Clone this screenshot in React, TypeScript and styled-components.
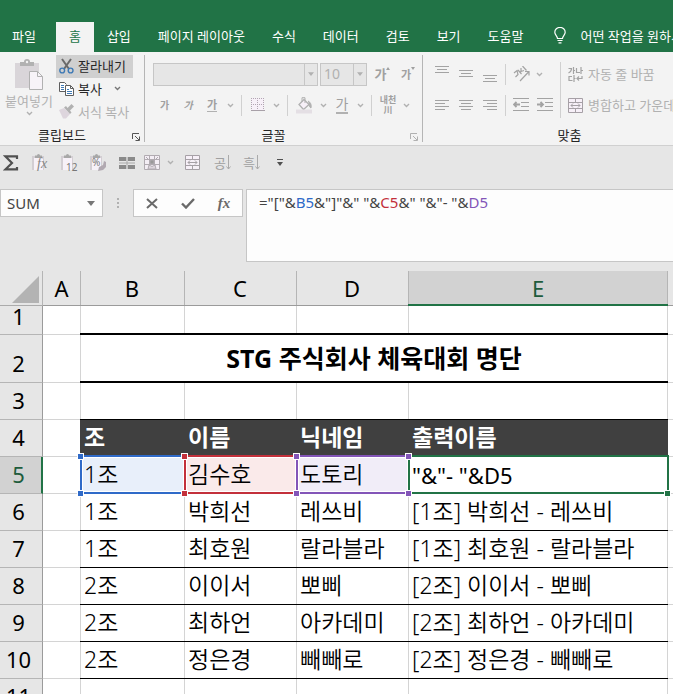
import React from 'react';
import styled, { createGlobalStyle, css } from 'styled-components';

const GRAY = '#b1b1b1';
const GREEN = '#217346';
const GRID = '#d4d4d4';

const GlobalStyle = createGlobalStyle`
  *, *::before, *::after { box-sizing: border-box; }
  body {
    margin: 0;
    background: #e6e6e6;
    font-family: "Noto Sans", "Noto Sans CJK KR", sans-serif;
    font-size: 13px;
    line-height: 20px;
    color: #262626;
    overflow: hidden;
  }
  button, input {
    font: inherit;
    color: inherit;
    border: 0;
    padding: 0;
    margin: 0;
    background: transparent;
    min-width: 0;
  }
  svg { display: block; flex: none; }
`;

const Window = styled.div`
  display: flex;
  flex-direction: column;
  min-height: 100vh;
  overflow: hidden;
`;

/* ---------- tabs ---------- */
const TabBar = styled.nav`
  display: flex;
  align-items: stretch;
  height: 52px;
  padding-top: 22px;
  background: ${GREEN};
  white-space: nowrap;
  overflow: hidden;
`;
const Tab = styled.button<{ $active?: boolean; $file?: boolean }>`
  flex: none;
  padding: 0 14px 3px 13px;
  color: ${p => (p.$active ? GREEN : '#fff')};
  background: ${p => (p.$active ? '#f3f3f3' : 'transparent')};
  ${p => p.$active && css`padding-right: 13px;`}
  ${p => p.$file && css`margin-right: 6px; padding-left: 12px;`}
`;
const TellMe = styled.button`
  display: flex;
  align-items: center;
  gap: 14px;
  flex: none;
  margin-left: 17px;
  padding-bottom: 3px;
  color: #fff;
`;

/* ---------- ribbon ---------- */
const Ribbon = styled.div`
  display: flex;
  height: 94px;
  padding-top: 3px;
  background: #f3f3f3;
  border-bottom: 1px solid #d0d0d0;
  overflow: hidden;
  white-space: nowrap;
`;
const Group = styled.section<{ $w: number }>`
  flex: none;
  display: flex;
  flex-direction: column;
  width: ${p => p.$w}px;
  margin-bottom: 3px;
  border-right: 1px solid #b5b5b5;
`;
const GroupBody = styled.div`
  display: flex;
  flex: 1;
`;
const GroupFoot = styled.div`
  display: grid;
  grid-template-columns: 1fr 20px;
  align-items: center;
  justify-items: center;
  height: 14px;
  line-height: 14px;
`;
const Launcher = styled.button`
  padding: 3px 0 0 4px;
`;
const PasteButton = styled.button`
  display: flex;
  flex-direction: column;
  align-items: center;
  width: 56px;
  padding: 4px 0 0 2px;
  color: ${GRAY};
  line-height: 18px;
  gap: 1px;
`;
const Stack = styled.div`
  display: flex;
  flex-direction: column;
`;
const LabelButton = styled.button<{ $on?: boolean; $off?: boolean }>`
  display: flex;
  align-items: center;
  gap: 4px;
  width: 77px;
  height: 23px;
  padding: 0 3px 2px;
  background: ${p => (p.$on ? '#d0d0d0' : 'transparent')};
  color: ${p => (p.$off ? GRAY : '#262626')};
`;
const Tools = styled.div<{ $pad: number }>`
  display: flex;
  flex-direction: column;
  gap: 3px;
  padding: 5px 0 0 ${p => p.$pad}px;
`;
const ToolRow = styled.div`
  display: flex;
  align-items: center;
  height: 28px;
`;
const Tool = styled.button<{ $w?: number }>`
  flex: none;
  display: flex;
  align-items: center;
  justify-content: center;
  width: ${p => p.$w ?? 24}px;
  height: 24px;
  color: ${GRAY};
`;
const Rule = styled.span<{ $tall?: boolean; $tight?: boolean }>`
  flex: none;
  width: 1px;
  height: ${p => (p.$tall ? 56 : 21)}px;
  margin: ${p => (p.$tall ? '7px 3px 0' : p.$tight ? '0 3px' : '0 4px 0 5px')};
  background: #d0d0d0;
`;
const Combo = styled.label<{ $w: number }>`
  display: flex;
  align-items: stretch;
  width: ${p => p.$w}px;
  height: 23px;
  margin-right: 2px;
  background: #e6e6e6;
  border: 1px solid #c6c6c6;
  color: ${GRAY};
  font-size: 14px;
`;
const ComboInput = styled.input`
  flex: 1;
  width: 0;
  padding-left: 3px;
`;
const ComboArrow = styled.button`
  display: grid;
  place-items: center;
  width: 13px;
  border-left: 1px solid #c6c6c6;
`;
const Ga = styled.span<{ $s: number; $bold?: boolean; $italic?: boolean; $line?: number }>`
  font-size: ${p => p.$s}px;
  line-height: ${p => p.$s + 2}px;
  font-weight: ${p => (p.$bold ? 700 : 400)};
  color: #a0a0a0;
  ${p => p.$italic && css`font-style: italic;`}
  ${p => p.$line && css`border-bottom: ${p.$line}px solid #b1b1b1;`}
`;
const Chars = styled.span`
  display: flex;
  flex-direction: column;
  align-items: center;
  font-size: 9px;
  line-height: 10px;
  font-weight: 700;
  color: #a0a0a0;
`;
const TextTool = styled.button`
  display: flex;
  align-items: center;
  gap: 5px;
  height: 28px;
  color: ${GRAY};
`;

/* ---------- quick access ---------- */
const QuickBar = styled.div`
  display: flex;
  align-items: center;
  height: 43px;
  padding: 0 0 10px;
`;
const SumTool = styled(Tool)`
  width: 22px;
  margin-right: 4px;
`;

/* ---------- formula bar ---------- */
const FormulaRow = styled.div`
  display: flex;
  align-items: flex-start;
  height: 82px;
`;
const NameBox = styled.label`
  display: flex;
  align-items: center;
  width: 103px;
  height: 28px;
  padding: 0 7px 0 6px;
  background: #fdfdfd;
  border: 1px solid #c6c6c6;
  font-size: 15px;
  color: #444;
`;
const NameInput = styled.input`
  flex: 1;
  width: 0;
`;
const Grip = styled.span`
  display: grid;
  place-items: center;
  width: 30px;
  height: 28px;
`;
const EditButtons = styled.div`
  display: flex;
  align-items: center;
  justify-content: space-between;
  width: 110px;
  height: 28px;
  margin-right: 3px;
  padding: 0 6px;
  background: #fdfdfd;
  border: 1px solid #c6c6c6;
`;
const FormulaBox = styled.div`
  flex: 1;
  height: 73px;
  padding: 2px 12px;
  background: #fdfdfd;
  border: 1px solid #c6c6c6;
  border-right: 0;
  font-size: 15px;
  color: #444;
  white-space: pre;
  outline: 0;
`;
const Ref = styled.span<{ $c: string }>`
  color: ${p => p.$c};
`;
const Fx = styled.span`
  font-family: "Liberation Serif", serif;
  font-style: italic;
  font-weight: 700;
  font-size: 15px;
  color: #6a6a6a;
`;

/* ---------- sheet ---------- */
const Sheet = styled.table`
  width: 100%;
  table-layout: fixed;
  border-collapse: separate;
  border-spacing: 0;
  background: #fff;
  color: #000;
  font-size: 23px;
  line-height: 28px;
  white-space: nowrap;
`;
const Col = styled.col<{ $w?: number }>`
  width: ${p => (p.$w ? `${p.$w}px` : 'auto')};
`;
const ColHead = styled.th<{ $on?: boolean; $first?: boolean }>`
  height: 35px;
  padding: 0;
  font-size: 22px;
  font-weight: 400;
  background: ${p => (p.$on ? '#d2d2d2' : '#e6e6e6')};
  color: ${p => (p.$on ? '#1e5c3c' : '#000')};
  border-bottom: ${p => (p.$on ? `2px solid ${GREEN}` : '1px solid #9b9b9b')};
  box-shadow: ${p => (p.$first ? 'none' : 'inset 1px 0 #b5b5b5')}${p => (p.$on ? ', inset -1px 0 #b5b5b5' : '')};
`;
const Corner = styled.td`
  padding: 4px 3px 2px 12px;
  background: #e6e6e6;
  border-bottom: 1px solid #ababab;
  border-right: 1px solid #b5b5b5;
`;
const Row = styled.tr<{ $h: number }>`
  height: ${p => p.$h}px;
`;
const RowHead = styled.th<{ $on?: boolean }>`
  padding: 0 ${p => (p.$on ? 4 : 5)}px 0 0;
  font-size: 22px;
  font-weight: 400;
  vertical-align: bottom;
  background: ${p => (p.$on ? '#d2d2d2' : '#e6e6e6')};
  color: ${p => (p.$on ? '#1e5c3c' : '#000')};
  border-bottom: 1px solid #b5b5b5;
  border-right: ${p => (p.$on ? `2px solid ${GREEN}` : '1px solid #9b9b9b')};
`;
const HeadNumber = styled.div<{ $short?: boolean }>`
  height: ${p => (p.$short ? 28 : 33)}px;
  line-height: ${p => (p.$short ? 20 : 28)}px;
`;
type CellKind = 'plain' | 'inked' | 'thick';
const Cell = styled.td<{ $kind?: CellKind; $edge?: 'none' | 'left' | 'both' }>`
  position: relative;
  padding: 0 0 2px 4px;
  font-weight: 350;
  border-bottom: ${p =>
    p.$kind === 'thick' ? '2px solid #000' : p.$kind === 'inked' ? '1px solid #000' : `1px solid ${GRID}`};
  box-shadow: ${p =>
    p.$edge === 'none'
      ? 'none'
      : p.$edge === 'both'
        ? `inset 1px 0 ${GRID}, inset -1px 0 ${GRID}`
        : `inset 1px 0 ${GRID}`};
`;
const Title = styled(Cell)`
  padding: 0;
  text-align: center;
  font-size: 25px;
  font-weight: 700;
`;
const Caption = styled(Cell)`
  background: #404040;
  color: #fff;
  font-weight: 700;
  border-bottom-color: #404040;
`;
const Frame = styled.span<{ $c: string; $fill: string; $last?: boolean }>`
  position: absolute;
  inset: -2px ${p => (p.$last ? -1 : 0)}px -1px 0;
  border: 2px solid ${p => p.$c};
  border-right-width: ${p => (p.$last ? 2 : 0)}px;
  background: ${p => p.$fill};
  box-shadow: inset ${p => (p.$last ? 0 : 1)}px 1px #fff, inset -1px -1px #fff;
`;
const Handle = styled.i<{ $c: string; $bottom?: boolean; $right?: boolean }>`
  position: absolute;
  z-index: 1;
  width: 7px;
  height: 7px;
  background: ${p => p.$c};
  border: 1px solid #fff;
  ${p => (p.$bottom ? 'bottom: -4px;' : 'top: -4px;')}
  ${p => (p.$right ? 'right: -3px;' : 'left: -3px;')}
`;
const CellText = styled.span<{ $low?: boolean }>`
  position: relative;
  display: block;
  font-size: ${p => (p.$low ? 22 : 23)}px;
  font-weight: ${p => (p.$low ? 400 : 350)};
  line-height: 28px;
  padding-top: ${p => (p.$low ? 2 : 0)}px;
`;

/* ---------- drawings ---------- */
const Chevron = ({ c = '#b1b1b1' }: { c?: string }) => (
  <svg width="7" height="5" viewBox="0 0 7 5" fill="none" stroke={c} strokeWidth="1.4"><path d="M1 1l2.5 2.5L6 1" /></svg>
);
const Triangle = ({ c = '#b1b1b1', w = 6 }: { c?: string; w?: number }) => (
  <svg width={w} height={w / 2 + 1} viewBox="0 0 8 5"><path d="M0 0h8L4 5z" fill={c} /></svg>
);
const LaunchIcon = ({ c }: { c: string }) => (
  <svg width="8" height="8" viewBox="0 0 8 8" fill="none" stroke={c}><path d="M.5 6V.5H7M3 3l4 4M7.5 3.500v4H3.500" /></svg>
);
const Bulb = () => (
  <svg width="12" height="17" viewBox="0 0 12 17" fill="none" stroke="#fff" strokeWidth="1.2">
    <path d="M3.500 11.500C3.500 9 .8 8 .8 5.200A5.100 4.700 0 0 1 11.200 5.200C11.200 8 8.500 9 8.500 11.500zM3.500 13.500h5M4.500 15.800h3" />
  </svg>
);
const PasteIcon = () => (
  <svg width="29" height="32" viewBox="0 0 29 32">
    <path d="M0 4h24v25H0z" fill="#d9d5d9" />
    <path d="M5 3h4a3 3 0 0 1 6 0h4v4H5z" fill="#b1b1b1" /><circle cx="12" cy="3" r="1.200" fill="#f3f3f3" />
    <path d="M14.500 12.500h8l5 5v13h-13z" fill="#f7f3f8" stroke="#b1b1b1" /><path d="M22.500 12.500v5h5" fill="none" stroke="#b1b1b1" />
  </svg>
);
const ScissorsIcon = () => (
  <svg width="15" height="16" viewBox="0 0 15 16" fill="none">
    <path d="M3 1l7 10M12 1L5 11" stroke="#6a6a6a" strokeWidth="2" />
    <circle cx="3.200" cy="12.500" r="2.400" stroke="#3f7ab5" strokeWidth="1.400" /><circle cx="11.600" cy="12.500" r="2.400" stroke="#3f7ab5" strokeWidth="1.400" />
  </svg>
);
const CopyIcon = () => (
  <svg width="15" height="14" viewBox="0 0 15 14" fill="#fff" stroke="#5e5e5e">
    <path d="M6 9.500H.5v-9h5l2 2" /><path d="M6.500 3.500h5l3 3v7h-8z" /><path d="M11.500 3.500v3h3" fill="none" />
    <path d="M2 3.500h3M2 5.500h3M2 7.500h3M8 7.500h2M8 9.500h5M8 11.500h5" stroke="#3f7ab5" />
  </svg>
);
const BrushIcon = () => (
  <svg width="15" height="15" viewBox="0 0 15 15">
    <path d="M0 6l5-2 6 6-4 4.500H4z" fill="#ddd5dd" /><path d="M5 3.500l2-1.500 1.500 2L12.500 0 15 2.500l-4 4 1.500 2L11 10z" fill="#b1b1b1" />
  </svg>
);
const BordersIcon = () => (
  <svg width="14" height="14" viewBox="0 0 14 14" fill="none" shapeRendering="crispEdges">
    <path d="M0 0h13v12H0z" fill="#f7f0f8" />
    <path d="M0 .5h13M0 6.500h13M.5 0v12M6.500 0v12M12.500 0v12" stroke="#b1a6b1" strokeDasharray="1 1" /><path d="M0 12.500h14" stroke="#a8a0a8" />
  </svg>
);
const PaintIcon = () => (
  <svg width="17" height="17" viewBox="0 0 17 17" fill="none" stroke="#b1b1b1">
    <path d="M8 2.500l5 5-5.500 5-4.500-5z" fill="#f7f0f8" strokeWidth="1.300" /><path d="M6 5V.7h3V6" /><path d="M12 4q4 2 3 7q-1 0-2-3" fill="#b1b1b1" />
    <path d="M0 14.500h16" stroke="#e4dfe4" strokeWidth="4" />
  </svg>
);
const Lines = ({ rows }: { rows: number[][] }) => (
  <svg width="14" height="20" viewBox="0 0 14 20" stroke="#a3a3a3" shapeRendering="crispEdges">
    {rows.map(([x, y, w]) => <path key={y} d={`M${x} ${y}.5h${w}`} />)}
  </svg>
);
const OrientIcon = () => (
  <svg width="17" height="16" viewBox="0 0 17 16" fill="none" stroke="#a3a3a3" strokeWidth="1.200">
    <path d="M7 15l8.500-9M12 5.500h4v4" /><path d="M1 7l3-2.500 1 4-2.500 2.500M5 4l3.500 4M7 6l2-1M8 2v3.500l3-1M9.500 0l4 4.500" />
  </svg>
);
const IndentIcon = ({ right }: { right?: boolean }) => (
  <svg width="16" height="14" viewBox="0 0 16 14" fill="none" stroke="#a3a3a3">
    <path d="M0 .5h16M8 4.500h8M8 8.500h8M0 12.500h16" shapeRendering="crispEdges" />
    <path d={right ? 'M0 6.500h6M3.500 4L6 6.500 3.500 9' : 'M7 6.500H1M3.500 4L1 6.500 3.500 9'} strokeWidth="1.800" />
  </svg>
);
const MergeIcon = () => (
  <svg width="15" height="15" viewBox="0 0 15 15" fill="#f7f0f8" stroke="#a6a0a6">
    <path d="M.5.5h14v14H.5zM.5 4.500h14M.5 10.500h14M7.500.5v4M7.500 10.500v4M3 7.500h9M5 5.500l-2 2 2 2M10 5.500l2 2-2 2" />
  </svg>
);
const WrapIcon = () => (
  <svg width="15" height="15" viewBox="0 0 15 15" fill="none" stroke="#a3a3a3" strokeWidth="1.200">
    <path d="M.5 1.500h3Q3.500 4.500.5 6M5.500 0v7M5.500 3.500h1.500M8.500 1v4.500h3.500M13 0v7M13 3.500h2M4 9.500H1v4h3.500M6 8v7M6 11.500h1.500M14 9v2.500H9.500M11 9.500l-2 2 2 2" />
  </svg>
);
const SigmaIcon = () => (
  <svg width="16" height="16" viewBox="0 0 16 16" fill="none" stroke="#505050" strokeWidth="2.200">
    <path d="M14 4V1.400H2.500L9 8l-6.500 6.300H14V12" />
  </svg>
);
const Clip = ({ children }: { children: React.ReactNode }) => (
  <svg width="17" height="18" viewBox="0 0 17 18">
    <path d="M0 2h12v14H0z" fill="#d3ced3" /><path d="M2 4h9v12H2z" fill="#f7f1f8" /><path d="M3 1.500h2a1.500 1.500 0 0 1 3 0h2V4H3z" fill="#a8a8a8" />
    {children}
  </svg>
);
const CellsIcon = () => (
  <svg width="16" height="14" viewBox="0 0 16 14"><path d="M0 1h7v4H0zM9 1h7v4H9zM0 9h7v4H0zM9 9h7v4H9z" fill="#8a8a8a" /><path d="M0 7h16M8 1v12" stroke="#a8a8a8" /></svg>
);
const SelectIcon = () => (
  <svg width="16" height="16" viewBox="0 0 16 16" fill="#f4eef5" stroke="#b1abb1">
    <path d="M.5.5h15v14H.5zM.5 4.500h15M.5 9.500h15M5.500.5v14M10.500.5v14M2 2l3 3M14 2l-3 3" /><path d="M6 5h4v4H6z" fill="#999" /><path d="M5 10q3 3 6 0l1 4H4z" fill="#ddd5dd" />
  </svg>
);
const SortArrow = () => (
  <svg width="5" height="15" viewBox="0 0 5 15" fill="none" stroke="#aaa"><path d="M2.500 0v14M.5 11.500l2 2.500 2-2.500" /></svg>
);
const SortMark = styled.span`
  font-size: 13px;
  line-height: 18px;
  color: #a0a0a0;
`;

const BLUE = '#2f6ac8';
const RED = '#c3303b';
const PURPLE = '#8355b8';

const tabs = ['삽입', '페이지 레이아웃', '수식', '데이터', '검토', '보기', '도움말'];
const people = [
  [6, '1조', '박희선', '레쓰비', '[1조] 박희선 - 레쓰비'],
  [7, '1조', '최호원', '랄라블라', '[1조] 최호원 - 랄라블라'],
  [8, '2조', '이이서', '뽀삐', '[2조] 이이서 - 뽀삐'],
  [9, '2조', '최하언', '아카데미', '[2조] 최하언 - 아카데미'],
  [10, '2조', '정은경', '빼빼로', '[2조] 정은경 - 빼빼로'],
];

const EmptyRow = ({ n, h, kind }: { n: number; h: number; kind: CellKind }) => (
  <Row $h={h}>
    <RowHead scope="row"><HeadNumber $short={h < 30}>{n}</HeadNumber></RowHead>
    <Cell $edge="none" />
    <Cell $kind={kind} /><Cell $kind={kind} /><Cell $kind={kind} /><Cell $kind={kind} $edge="both" />
    <Cell $edge="none" />
  </Row>
);

export default function App() {
  return (
    <Window>
      <GlobalStyle />
      <TabBar>
        <Tab $file>파일</Tab>
        <Tab $active>홈</Tab>
        {tabs.map(t => <Tab key={t}>{t}</Tab>)}
        <TellMe><Bulb />어떤 작업을 원하시나요?</TellMe>
      </TabBar>

      <Ribbon>
        <Group $w={145}>
          <GroupBody>
            <PasteButton><PasteIcon />붙여넣기<Chevron /></PasteButton>
            <Stack>
              <LabelButton $on><ScissorsIcon />잘라내기</LabelButton>
              <LabelButton><CopyIcon />복사<Tool as="span"><Chevron c="#777" /></Tool></LabelButton>
              <LabelButton $off><BrushIcon />서식 복사</LabelButton>
            </Stack>
          </GroupBody>
          <GroupFoot><span>클립보드</span><Launcher aria-label="클립보드 옵션"><LaunchIcon c="#555" /></Launcher></GroupFoot>
        </Group>

        <Group $w={278}>
          <GroupBody>
            <Tools $pad={8}>
              <ToolRow>
                <Combo $w={165}><ComboInput aria-label="글꼴" defaultValue="" /><ComboArrow aria-label="글꼴 목록"><Triangle /></ComboArrow></Combo>
                <Combo $w={47}><ComboInput aria-label="글꼴 크기" defaultValue="10" /><ComboArrow aria-label="크기 목록"><Triangle /></ComboArrow></Combo>
                <Tool $w={27}><Ga $s={13} $bold>가</Ga><svg width="4" height="14" viewBox="0 0 4 14"><path d="M0 3l2-3 2 3z" fill="#a0a0a0" /></svg></Tool>
                <Tool><Ga $s={11} $bold>가</Ga><svg width="4" height="14" viewBox="0 0 4 14"><path d="M0 0h4L2 3z" fill="#a0a0a0" /></svg></Tool>
              </ToolRow>
              <ToolRow>
                <Tool $w={23}><Ga $s={10} $bold>가</Ga></Tool>
                <Tool><Ga $s={10} $bold $italic>가</Ga></Tool>
                <Tool><Ga $s={11} $bold $line={1}>가</Ga></Tool>
                <Tool $w={12} aria-label="밑줄 옵션"><Chevron /></Tool>
                <Rule />
                <Tool aria-label="테두리"><BordersIcon /></Tool>
                <Tool $w={12} aria-label="테두리 옵션"><Chevron /></Tool>
                <Rule />
                <Tool aria-label="채우기 색"><PaintIcon /></Tool>
                <Tool $w={14} aria-label="채우기 옵션"><Chevron /></Tool>
                <Tool><Ga $s={14} $line={2}>가</Ga></Tool>
                <Tool $w={12} aria-label="글꼴 색 옵션"><Chevron /></Tool>
                <Rule />
                <Tool><Chars><span>내천</span><span>川</span></Chars></Tool>
                <Tool $w={12} aria-label="윗주 옵션"><Chevron /></Tool>
              </ToolRow>
            </Tools>
          </GroupBody>
          <GroupFoot><span>글꼴</span><Launcher aria-label="글꼴 옵션"><LaunchIcon c="#b1b1b1" /></Launcher></GroupFoot>
        </Group>

        <Group $w={314}>
          <GroupBody>
            <Tools $pad={7}>
              <ToolRow>
                <Tool aria-label="위쪽 맞춤"><Lines rows={[[0, 2, 14], [2, 5, 10], [0, 8, 14]]} /></Tool>
                <Tool aria-label="가운데 맞춤"><Lines rows={[[0, 6, 14], [2, 9, 10], [0, 12, 14]]} /></Tool>
                <Tool aria-label="아래쪽 맞춤"><Lines rows={[[0, 11, 14], [2, 14, 10], [0, 17, 14]]} /></Tool>
                <Rule $tight />
                <Tool aria-label="방향"><OrientIcon /></Tool>
                <Tool $w={12} aria-label="방향 옵션"><Chevron /></Tool>
              </ToolRow>
              <ToolRow>
                <Tool aria-label="왼쪽"><Lines rows={[[0, 5, 14], [0, 8, 10], [0, 11, 14], [0, 14, 10]]} /></Tool>
                <Tool aria-label="가운데"><Lines rows={[[0, 5, 14], [2, 8, 10], [0, 11, 14], [2, 14, 10]]} /></Tool>
                <Tool aria-label="오른쪽"><Lines rows={[[0, 5, 14], [4, 8, 10], [0, 11, 14], [4, 14, 10]]} /></Tool>
                <Rule $tight />
                <Tool aria-label="내어쓰기"><IndentIcon /></Tool>
                <Tool aria-label="들여쓰기"><IndentIcon right /></Tool>
              </ToolRow>
            </Tools>
            <Rule $tall />
            <Tools $pad={4}>
              <TextTool><WrapIcon />자동 줄 바꿈</TextTool>
              <TextTool><MergeIcon />병합하고 가운데 맞춤</TextTool>
            </Tools>
          </GroupBody>
          <GroupFoot><span>맞춤</span></GroupFoot>
        </Group>
      </Ribbon>

      <QuickBar>
        <SumTool aria-label="합계"><SigmaIcon /></SumTool>
        <Tool $w={29} aria-label="수식 붙여넣기"><Clip><text x="5" y="14" fontFamily="Liberation Serif" fontStyle="italic" fontSize="14" fill="#858585">fx</text></Clip></Tool>
        <Tool $w={29} aria-label="값 붙여넣기"><Clip><text x="5" y="17" fontFamily="Noto Sans" fontSize="10" fill="#777">12</text></Clip></Tool>
        <Tool $w={29} aria-label="서식 붙여넣기"><Clip><text x="2" y="12" fontFamily="Noto Sans" fontSize="10" fill="#777">%</text><path d="M8 17l1-4 4-2 1-4 2 1v5l-3 3z" fill="#b1a9b1" /></Clip></Tool>
        <Tool $w={27} aria-label="셀"><CellsIcon /></Tool>
        <Tool aria-label="선택"><SelectIcon /></Tool>
        <Tool $w={12} aria-label="선택 옵션"><Chevron /></Tool>
        <Tool $w={32} aria-label="병합"><MergeIcon /></Tool>
        <Tool $w={29} aria-label="오름차순"><SortMark>공</SortMark><SortArrow /></Tool>
        <Tool $w={29} aria-label="내림차순"><SortMark>흑</SortMark><SortArrow /></Tool>
        <Tool $w={27} aria-label="사용자 지정">
          <svg width="6" height="7" viewBox="0 0 6 7"><path d="M0 0h6v1H0zM0 3h6L3 7z" fill="#505050" /></svg>
        </Tool>
      </QuickBar>

      <FormulaRow>
        <NameBox><NameInput aria-label="이름 상자" defaultValue="SUM" /><Triangle c="#777" w={8} /></NameBox>
        <Grip><svg width="2" height="12" viewBox="0 0 2 12"><path d="M0 1h2v2H0zM0 5h2v2H0zM0 9h2v2H0z" fill="#b1b1b1" /></svg></Grip>
        <EditButtons>
          <Tool aria-label="취소"><svg width="12" height="11" viewBox="0 0 12 11"><path d="M1 1l10 9M11 1L1 10" stroke="#6a6a6a" strokeWidth="2" /></svg></Tool>
          <Tool aria-label="입력"><svg width="14" height="11" viewBox="0 0 14 11" fill="none"><path d="M1 5.500l4 4L13 1" stroke="#6a6a6a" strokeWidth="2.400" /></svg></Tool>
          <Tool aria-label="함수 삽입"><Fx>fx</Fx></Tool>
        </EditButtons>
        <FormulaBox role="textbox" aria-label="수식 입력줄" contentEditable suppressContentEditableWarning>
          {'="["&'}<Ref $c={BLUE}>B5</Ref>{'&"]"&" "&'}<Ref $c={RED}>C5</Ref>{'&" "&"- "&'}<Ref $c={PURPLE}>D5</Ref>
        </FormulaBox>
      </FormulaRow>

      <Sheet>
        <colgroup>
          <Col $w={43} /><Col $w={37} /><Col $w={104} /><Col $w={112} /><Col $w={112} /><Col $w={260} /><Col />
        </colgroup>
        <thead>
          <tr>
            <Corner><svg width="27" height="27" viewBox="0 0 27 27"><path d="M27 0v27H0z" fill="#b3b3b3" /></svg></Corner>
            <ColHead $first>A</ColHead><ColHead>B</ColHead><ColHead>C</ColHead><ColHead>D</ColHead><ColHead $on>E</ColHead><ColHead $first />
          </tr>
        </thead>
        <tbody>
          <EmptyRow n={1} h={29} kind="thick" />
          <Row $h={48}>
            <RowHead scope="row"><HeadNumber>2</HeadNumber></RowHead>
            <Cell $edge="none" />
            <Title colSpan={4} $kind="thick" $edge="both">STG 주식회사 체육대회 명단</Title>
            <Cell $edge="none" />
          </Row>
          <EmptyRow n={3} h={37} kind="inked" />
          <Row $h={37}>
            <RowHead scope="row"><HeadNumber>4</HeadNumber></RowHead>
            <Cell $edge="none" />
            {['조', '이름', '닉네임', '출력이름'].map(c => <Caption key={c} $edge="none">{c}</Caption>)}
            <Cell $edge="none" />
          </Row>
          <Row $h={37}>
            <RowHead scope="row" $on><HeadNumber>5</HeadNumber></RowHead>
            <Cell $edge="none" />
            <Cell><Frame $c={BLUE} $fill="#e8effa" /><Handle $c={BLUE} /><Handle $c={BLUE} $bottom /><CellText>1조</CellText></Cell>
            <Cell><Frame $c={RED} $fill="#faeaea" /><Handle $c={RED} /><Handle $c={RED} $bottom /><CellText>김수호</CellText></Cell>
            <Cell><Frame $c={PURPLE} $fill="#f1edf8" /><Handle $c={PURPLE} /><Handle $c={PURPLE} $bottom /><CellText>도토리</CellText></Cell>
            <Cell>
              <Frame $c={GREEN} $fill="#fff" $last /><Handle $c={PURPLE} /><Handle $c={PURPLE} $bottom />
              <Handle $c={GREEN} $bottom $right /><CellText $low>{'"&"- "&D5'}</CellText>
            </Cell>
            <Cell $edge="none" />
          </Row>
          {people.map(([n, team, name, nick, out]) => (
            <Row $h={37} key={n}>
              <RowHead scope="row"><HeadNumber>{n}</HeadNumber></RowHead>
              <Cell $edge="none" />
              <Cell $kind="inked">{team}</Cell><Cell $kind="inked">{name}</Cell><Cell $kind="inked">{nick}</Cell>
              <Cell $kind="inked" $edge="both">{out}</Cell>
              <Cell $edge="none" />
            </Row>
          ))}
          <EmptyRow n={11} h={37} kind="plain" />
        </tbody>
      </Sheet>
    </Window>
  );
}
